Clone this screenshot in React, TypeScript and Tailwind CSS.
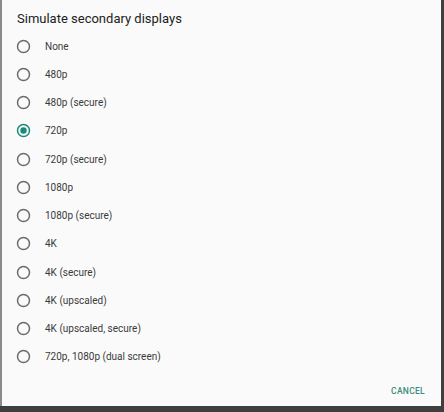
import React from 'react';

const options = [
  'None',
  '480p',
  '480p (secure)',
  '720p',
  '720p (secure)',
  '1080p',
  '1080p (secure)',
  '4K',
  '4K (secure)',
  '4K (upscaled)',
  '4K (upscaled, secure)',
  '720p, 1080p (dual screen)',
];

function Radio({ checked }: { checked: boolean }) {
  return (
    <svg width="15" height="15" viewBox="0 0 15 15">
      <circle cx="7.5" cy="7.5" r="6" fill="none" stroke={checked ? '#1a8a7a' : '#6b6b6b'} strokeWidth="1.5" />
      {checked && <circle cx="7.5" cy="7.5" r="3.2" fill="#1a8a7a" />}
    </svg>
  );
}

export default function App() {
  const selected = '720p';
  return (
    <div className="w-[444px] h-[412px] bg-[#3f3f3f] flex flex-col" style={{ fontFamily: 'Roboto, "Liberation Sans", sans-serif' }}>
      <div className="w-[441px] h-[406px] bg-[#fafafa] border-l-2 border-[#8a8a8a] flex flex-col">
        <div className="h-[32px] pl-[15px] pt-[10px] text-[13px] leading-[18px] text-[#212121]">
          Simulate secondary displays
        </div>
        <div className="flex flex-col">
          {options.map((o) => (
            <div key={o} className="h-[28.25px] flex items-center pl-[14px]">
              <Radio checked={o === selected} />
              <span className="ml-[14px] text-[10px] text-[#3a3a3a]">{o}</span>
            </div>
          ))}
        </div>
        <div className="flex-1 flex justify-end items-start pt-[14px] pr-[16px]">
          <span className="text-[8.5px] font-medium tracking-[0.3px] text-[#3a8a7e]">CANCEL</span>
        </div>
      </div>
    </div>
  );
}
